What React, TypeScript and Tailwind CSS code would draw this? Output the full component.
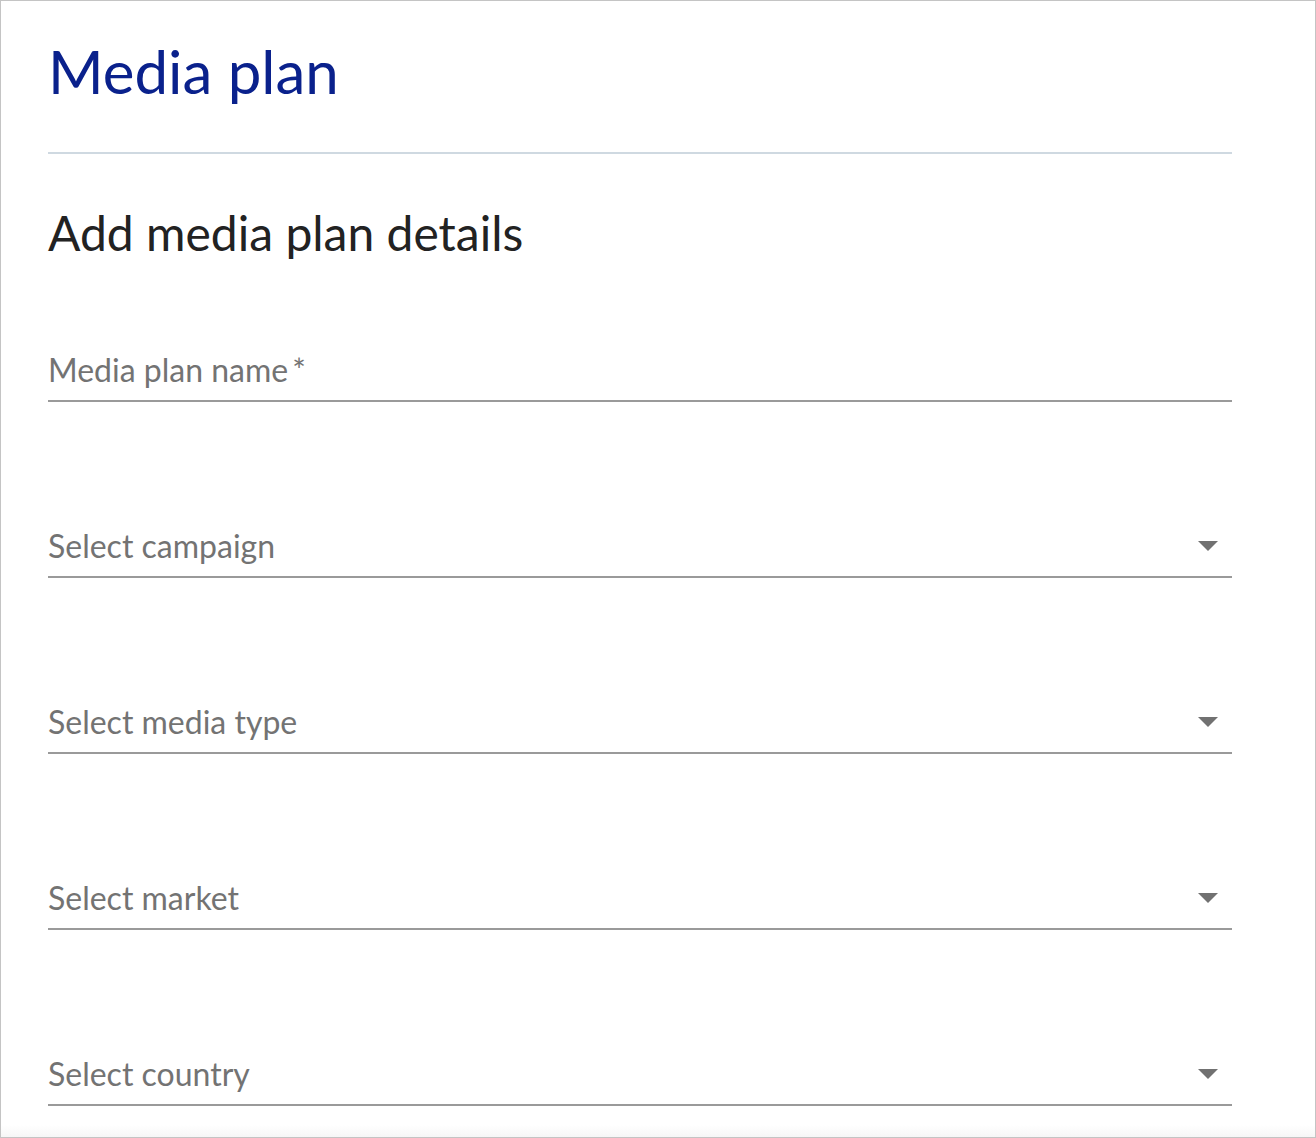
import React from "react";

const fields = [
  { label: "Media plan name", required: true, select: false },
  { label: "Select campaign", select: true },
  { label: "Select media type", select: true },
  { label: "Select market", select: true },
  { label: "Select country", select: true },
];

function Caret() {
  return (
    <svg width="20" height="10" viewBox="0 0 20 10" aria-hidden>
      <path d="M0 0 L20 0 L10 10 Z" fill="#717171" />
    </svg>
  );
}

function Field({ label, required, select }: { label: string; required?: boolean; select?: boolean }) {
  return (
    <div className="h-[176px] flex flex-col justify-end">
      <div className="flex items-center justify-between border-b-2 border-[#9a9a9a] pb-[11px]">
        <span className="text-[32px] leading-[38px] text-[#737373]">
          {label}
          {required ? <span className="ml-[4px]">*</span> : null}
        </span>
        {select ? (
          <span className="mr-[14px] flex items-center">
            <Caret />
          </span>
        ) : null}
      </div>
    </div>
  );
}

export default function App() {
  return (
    <div
      className="relative w-[1316px] h-[1138px] border border-[#c4c4c4] bg-white overflow-hidden"
      style={{ fontFamily: "Lato, 'Open Sans', sans-serif" }}
    >
      <div className="pl-[47px] pr-[83px] pt-[30px]">
        <h1 className="text-[60px] leading-[80px] text-[#0a218c] border-b-2 border-[#cfd9e1] pb-[41px]">
          Media plan
        </h1>
        <h2 className="mt-[50px] text-[48px] leading-[58px] text-[#222]">Add media plan details</h2>
        <div className="-mt-[36px]">
          {fields.map((f) => (
            <Field key={f.label} {...f} />
          ))}
        </div>
      </div>
      {/* bottom fade */}
      <div className="absolute inset-x-0 bottom-0 h-[12px] bg-gradient-to-b from-white/0 to-[#f6f6f6]" />
    </div>
  );
}
